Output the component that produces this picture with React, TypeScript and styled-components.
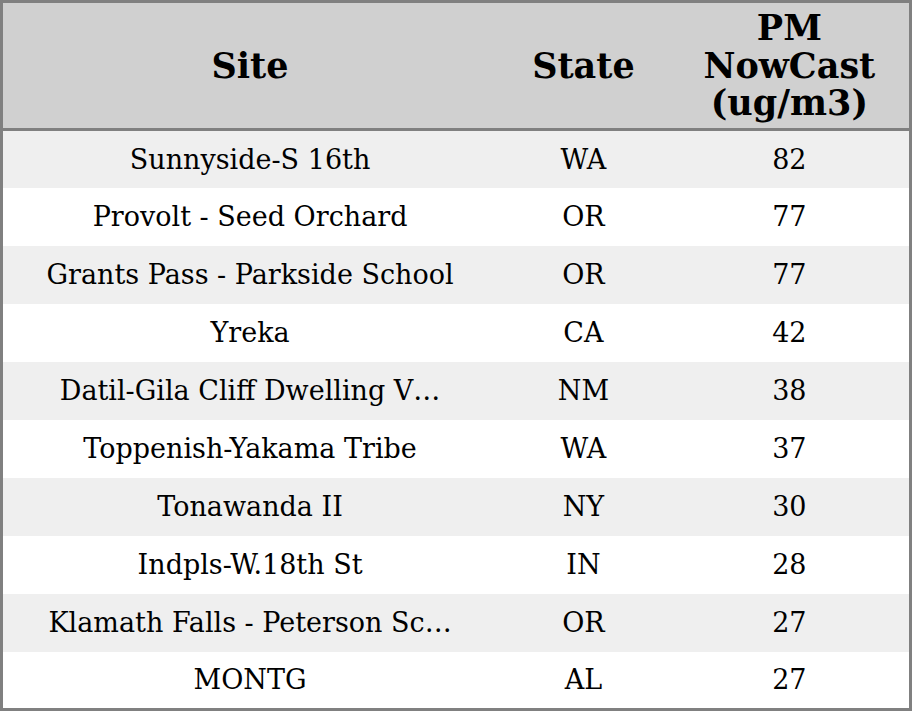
import React from "react";
import styled, { createGlobalStyle } from "styled-components";

const Global = createGlobalStyle`
  html, body { margin: 0; padding: 0; background: #ffffff; }
  body { font-family: "DejaVu Serif", serif; }
`;

const Table = styled.table`
  width: 912px;
  height: 711px;
  border-collapse: collapse;
  table-layout: fixed;
  border: 3px solid #808080;
  font-family: "DejaVu Serif", serif;
  color: #000;
`;

const HeadRow = styled.tr`
  height: 128px;
  background: #d0d0d0;
  border-bottom: 3px solid #808080;
`;

const Th = styled.th`
  padding: 0;
  font-size: 35px;
  font-weight: bold;
  line-height: 37.5px;
  text-align: center;
  vertical-align: middle;
`;

const Row = styled.tr<{ $shade: boolean }>`
  height: 57.7px;
  background: ${(p) => (p.$shade ? "#efefef" : "#ffffff")};
`;

const Td = styled.td`
  padding: 0;
  font-size: 27px;
  text-align: center;
  vertical-align: middle;
  white-space: nowrap;
`;

const rows: [string, string, number][] = [
  ["Sunnyside-S 16th", "WA", 82],
  ["Provolt - Seed Orchard", "OR", 77],
  ["Grants Pass - Parkside School", "OR", 77],
  ["Yreka", "CA", 42],
  ["Datil-Gila Cliff Dwelling V\u2026", "NM", 38],
  ["Toppenish-Yakama Tribe", "WA", 37],
  ["Tonawanda II", "NY", 30],
  ["Indpls-W.18th St", "IN", 28],
  ["Klamath Falls - Peterson Sc\u2026", "OR", 27],
  ["MONTG", "AL", 27],
];

export default function App() {
  return (
    <>
      <Global />
      <Table>
        <colgroup>
          <col style={{ width: 494 }} />
          <col style={{ width: 172 }} />
          <col style={{ width: 240 }} />
        </colgroup>
        <thead>
          <HeadRow>
            <Th>Site</Th>
            <Th>State</Th>
            <Th>
              PM
              <br />
              NowCast
              <br />
              (ug/m3)
            </Th>
          </HeadRow>
        </thead>
        <tbody>
          {rows.map(([site, state, val], i) => (
            <Row key={i} $shade={i % 2 === 0}>
              <Td>{site}</Td>
              <Td>{state}</Td>
              <Td>{val}</Td>
            </Row>
          ))}
        </tbody>
      </Table>
    </>
  );
}
